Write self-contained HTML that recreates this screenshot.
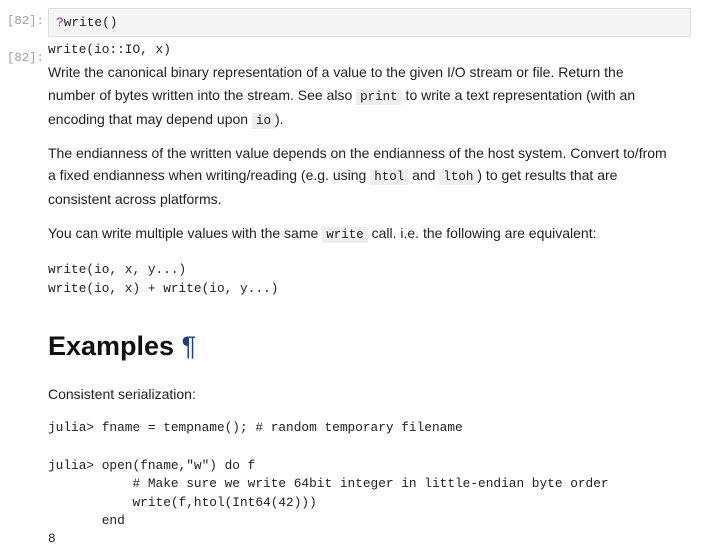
<!DOCTYPE html>
<html><head><style>
body{margin:0;background:#fff;width:701px;height:558px;overflow:hidden;font-family:"Liberation Sans",sans-serif;color:#222;}
.p{position:absolute;font-family:"Liberation Mono",monospace;font-size:12.3px;color:#a0a0a0;}
.box{position:absolute;left:48px;top:8px;width:643px;height:29px;background:#f5f5f5;border:1px solid #e0e0e0;box-sizing:border-box;}
.t{position:absolute;left:48px;font-size:14px;white-space:nowrap;}
.t.m,.m{font-family:"Liberation Mono",monospace;font-size:12.8px;}
code{font-family:"Liberation Mono",monospace;font-size:12.5px;background:#eee;padding:1px 4px;}
</style></head><body>
<div class="p" style="left:7px;top:14px">[82]:</div>
<div class="box"><span class="m" style="position:absolute;left:7px;top:6px;color:#222"><span style="color:#a020f0">?</span>write()</span></div>
<div class="p" style="left:7px;top:51px">[82]:</div>
<div class="t m" style="top:42px">write(io::IO, x)</div>
<div class="t" style="top:61px;line-height:22.5px">Write the canonical binary representation of a value to the given I/O stream or file. Return the<br>number of bytes written into the stream. See also <code>print</code> to write a text representation (with an<br>encoding that may depend upon <code>io</code>).</div>
<div class="t" style="top:142px;line-height:22px">The endianness of the written value depends on the endianness of the host system. Convert to/from<br>a fixed endianness when writing/reading (e.g. using <code>htol</code> and <code>ltoh</code>) to get results that are<br>consistent across platforms.</div>
<div class="t" style="top:225px">You can write multiple values with the same <code>write</code> call. i.e. the following are equivalent:</div>
<div class="t m" style="top:260px;line-height:19px">write(io, x, y...)<br>write(io, x) + write(io, y...)</div>
<div class="t" style="top:331px;font-size:27px;font-weight:bold;color:#111">Examples <span style="color:#1a3d8f;font-weight:normal">¶</span></div>
<div class="t" style="top:386px">Consistent serialization:</div>
<div class="t m" style="top:420px;white-space:pre">julia&gt; fname = tempname(); # random temporary filename</div>
<div class="t m" style="top:457px;white-space:pre;line-height:18.3px">julia&gt; open(fname,"w") do f
           # Make sure we write 64bit integer in little-endian byte order
           write(f,htol(Int64(42)))
       end
8</div>
</body></html>
